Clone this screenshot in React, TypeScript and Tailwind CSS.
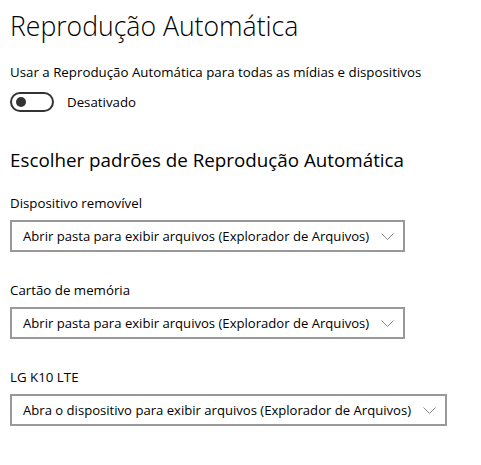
import React from "react";

interface DropdownProps {
  label: string;
  value: string;
}

const Chevron: React.FC = () => (
  <svg width="13" height="7" viewBox="0 0 13 7" fill="none" className="ml-[12px] shrink-0">
    <path d="M0.5 0.5L6.5 6.5L12.5 0.5" stroke="#8a8a8a" strokeWidth="1" />
  </svg>
);

const Dropdown: React.FC<DropdownProps> = ({ label, value }) => {
  return (
    <div className="flex flex-col items-start">
      <div className="text-[13.3px] leading-[20px] text-black">{label}</div>
      <div className="mt-[7px] h-[32px] border-2 border-[#999999] flex items-center pl-[11px] pr-[9px]">
        <span className="text-[13.1px] leading-[20px] text-black whitespace-nowrap">{value}</span>
        <Chevron />
      </div>
    </div>
  );
};

const Toggle: React.FC = () => (
  <div className="w-[44px] h-[20px] rounded-full border-2 border-[#333] flex items-center pl-[4px]">
    <div className="w-[10px] h-[10px] rounded-full bg-[#333]" />
  </div>
);

export default function App() {
  return (
    <div
      className="w-[481px] h-[465px] bg-white pl-[10px] pt-[6px] text-black"
      style={{ fontFamily: '"Open Sans", "Noto Sans", sans-serif' }}
    >
      <h1 className="text-[26.6px] leading-[40px] font-light">Reprodução Automática</h1>
      <div className="mt-[16px] text-[13.3px] leading-[20px]">
        Usar a Reprodução Automática para todas as mídias e dispositivos
      </div>
      <div className="mt-[10px] flex items-center">
        <Toggle />
        <span className="ml-[13px] text-[13.3px] leading-[20px]">Desativado</span>
      </div>
      <h2 className="mt-[34px] text-[18.8px] leading-[28px] font-normal">
        Escolher padrões de Reprodução Automática
      </h2>
      <div className="mt-[19px] flex flex-col gap-[28px]">
        <Dropdown label="Dispositivo removível" value="Abrir pasta para exibir arquivos (Explorador de Arquivos)" />
        <Dropdown label="Cartão de memória" value="Abrir pasta para exibir arquivos (Explorador de Arquivos)" />
        <Dropdown label="LG K10 LTE" value="Abra o dispositivo para exibir arquivos (Explorador de Arquivos)" />
      </div>
    </div>
  );
}
